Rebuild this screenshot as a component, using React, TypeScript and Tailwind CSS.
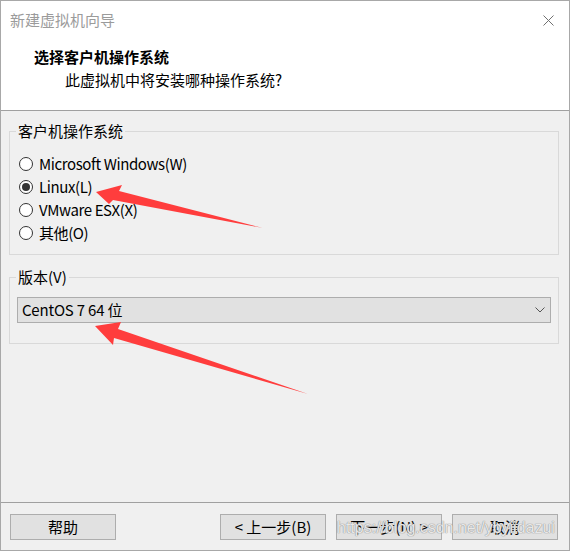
import React from "react";

const osOptions = [
  { label: "Microsoft Windows(W)", checked: false },
  { label: "Linux(L)", checked: true },
  { label: "VMware ESX(X)", checked: false },
  { label: "其他(O)", checked: false },
];

function Radio({ checked }: { checked: boolean }) {
  return (
    <span className="w-[14px] h-[14px] rounded-full border border-[#333333] bg-white flex items-center justify-center shrink-0">
      {checked && <span className="w-[8px] h-[8px] rounded-full bg-[#333333]" />}
    </span>
  );
}

function WinButton({ children }: { children: React.ReactNode }) {
  return (
    <button className="w-[106px] h-[26px] bg-[#e1e1e1] border border-[#adadad] text-[15px] leading-[20px] text-black flex items-center justify-center">
      {children}
    </button>
  );
}

export default function App() {
  return (
    <div className="relative w-[570px] h-[551px] flex flex-col bg-[#f0f0f0] border border-[#a8a8a8] font-['Noto_Sans_CJK_SC',sans-serif] text-[15px] leading-[20px] text-black overflow-hidden">
      {/* title + header */}
      <div className="bg-white border-b border-[#a0a0a0]">
        <div className="h-[38px] flex items-center justify-between pl-[9px] pr-[15px]">
          <span className="text-[#9b9b9b]">新建虚拟机向导</span>
          <svg width="11" height="11" viewBox="0 0 11 11" className="text-[#707070]">
            <path d="M0.5 0.5 L10.5 10.5 M10.5 0.5 L0.5 10.5" stroke="currentColor" strokeWidth="1" fill="none" />
          </svg>
        </div>
        <div className="pl-[33px] pt-[8px] pb-[20px]">
          <div className="font-bold">选择客户机操作系统</div>
          <div className="pl-[31px] mt-[3px]">此虚拟机中将安装哪种操作系统?</div>
        </div>
      </div>

      {/* body */}
      <div className="flex-1">
        <fieldset className="ml-[8px] mr-[10px] mt-[10px] border border-[#d9d9d9] pl-[9px] pt-[11px] pb-[10px]">
          <legend className="-ml-[3px] px-[2px]">客户机操作系统</legend>
          <div className="flex flex-col">
            {osOptions.map((o) => (
              <label key={o.label} className="h-[23px] flex items-center gap-[6px]">
                <Radio checked={o.checked} />
                <span className="tracking-[-0.4px]">{o.label}</span>
              </label>
            ))}
          </div>
        </fieldset>

        <fieldset className="ml-[8px] mr-[10px] mt-[12px] border border-[#d9d9d9] px-[7px] pt-[10px] pb-[20px]">
          <legend className="-ml-[1px] px-[2px]">版本(V)</legend>
          <div className="h-[26px] bg-[#e1e1e1] border border-[#adadad] flex items-center justify-between pl-[4px] pr-[5px]">
            <span className="tracking-[-0.2px]">CentOS 7 64 位</span>
            <svg width="10" height="6" viewBox="0 0 10 6" className="text-[#555555]">
              <path d="M0.5 0.5 L5 5 L9.5 0.5" stroke="currentColor" strokeWidth="1" fill="none" />
            </svg>
          </div>
        </fieldset>
      </div>

      {/* footer */}
      <div className="h-[48px] border-t border-[#a0a0a0] flex items-start pt-[11px] pl-[9px] pr-[11px]">
        <WinButton>帮助</WinButton>
        <div className="flex-1" />
        <div className="flex gap-[10px]">
          <WinButton>&lt; 上一步(B)</WinButton>
          <WinButton>下一步(N) &gt;</WinButton>
          <WinButton>取消</WinButton>
        </div>
      </div>

      {/* watermark */}
      <div className="absolute left-[336px] top-[516px] font-['Liberation_Sans',sans-serif] text-[16px] leading-[22px] text-white/80 [text-shadow:0_0_1px_#8a8a8a,0_0_1px_#8a8a8a] pointer-events-none">
        https://blog.csdn.net/ybyiidazui
      </div>

      {/* red annotation arrows */}
      <svg className="absolute left-0 top-0 pointer-events-none" width="570" height="551" viewBox="0 0 570 551">
        <polygon points="95,191 121,184 118,190 262,227 112,199 108,203" fill="#ff3d3d" />
        <polygon points="94,325 120,321 117,328 307,393 113,337 112,344" fill="#ff3d3d" />
      </svg>
    </div>
  );
}
